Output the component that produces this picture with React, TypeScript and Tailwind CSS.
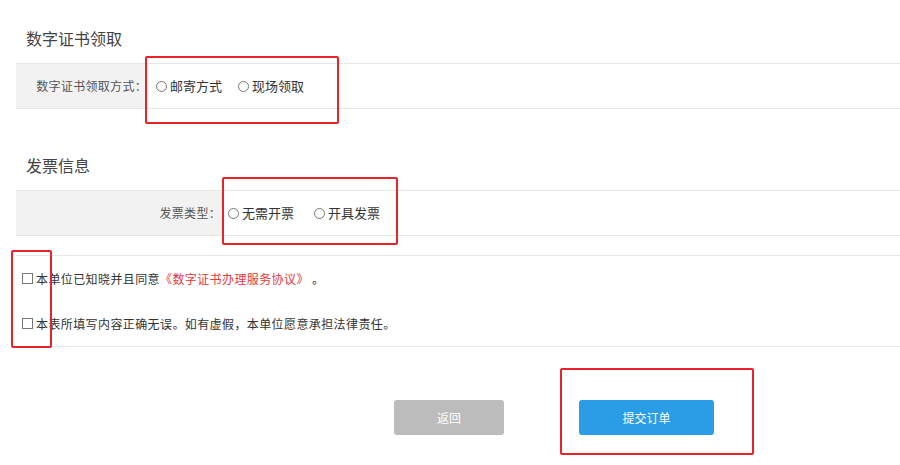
import React from 'react';

const Radio: React.FC<{ label: string }> = ({ label }) => (
  <label className="flex items-center text-[13px] text-[#333]">
    <span className="w-[11px] h-[11px] rounded-full border border-[#777] bg-white mr-[3px]" />
    {label}
  </label>
);

const Check: React.FC<{ children: React.ReactNode }> = ({ children }) => (
  <div className="h-[45px] flex items-center pl-[6px] text-[12px] tracking-[0.4px] text-[#333]">
    <span className="w-[11px] h-[11px] border border-[#777] bg-white mr-[3px]" />
    <span>{children}</span>
  </div>
);

const App: React.FC = () => {
  return (
    <div
      className="relative w-[900px] h-[465px] overflow-hidden bg-white"
      style={{ fontFamily: '"Noto Sans CJK SC", "Noto Sans", sans-serif' }}
    >
      <div className="pl-4">
        {/* 数字证书领取 */}
        <div className="pt-[28px] pb-[15px] pl-[10px] text-[16px] leading-[20px] text-[#444]">数字证书领取</div>
        <div className="h-[46px] flex border-y border-[#e6e6e6]">
          <div className="w-[132px] bg-[#f2f2f2] flex items-center justify-end pr-[1px] text-[12px] tracking-[0.3px] text-[#555]">
            数字证书领取方式：
          </div>
          <div className="flex items-center gap-[16px] pl-[8px]">
            <Radio label="邮寄方式" />
            <Radio label="现场领取" />
          </div>
        </div>

        {/* 发票信息 */}
        <div className="pt-[46px] pb-[15px] pl-[10px] text-[16px] leading-[20px] text-[#444]">发票信息</div>
        <div className="h-[46px] flex border-y border-[#e6e6e6]">
          <div className="w-[206px] bg-[#f2f2f2] flex items-center justify-end pr-[1px] text-[12px] tracking-[0.3px] text-[#555]">
            发票类型：
          </div>
          <div className="flex items-center gap-[20px] pl-[6px]">
            <Radio label="无需开票" />
            <Radio label="开具发票" />
          </div>
        </div>

        {/* 协议 */}
        <div className="mt-[19px] border-y border-[#e6e6e6]">
          <Check>
            本单位已知晓并且同意<span className="text-[#e4393c]">《数字证书办理服务协议》</span> 。
          </Check>
          <Check>本表所填写内容正确无误。如有虚假，本单位愿意承担法律责任。</Check>
        </div>

        <div className="mt-[53px] ml-[378px] flex gap-[75px]">
          <button className="w-[110px] h-[35px] rounded-[3px] bg-[#bcbcbc] text-white text-[12px]">返回</button>
          <button className="w-[135px] h-[35px] rounded-[3px] bg-[#2b9de6] text-white text-[12px]">提交订单</button>
        </div>
      </div>

      {/* 红色标注框 */}
      <div className="absolute left-[145px] top-[56px] w-[194px] h-[68px] border-2 border-[#e8232a] rounded-[2px]" />
      <div className="absolute left-[222px] top-[177px] w-[176px] h-[68px] border-2 border-[#e8232a] rounded-[2px]" />
      <div className="absolute left-[11px] top-[250px] w-[41px] h-[98px] border-2 border-[#e8232a] rounded-[2px]" />
      <div className="absolute left-[560px] top-[368px] w-[194px] h-[87px] border-2 border-[#e8232a] rounded-[2px]" />
    </div>
  );
};

export default App;
